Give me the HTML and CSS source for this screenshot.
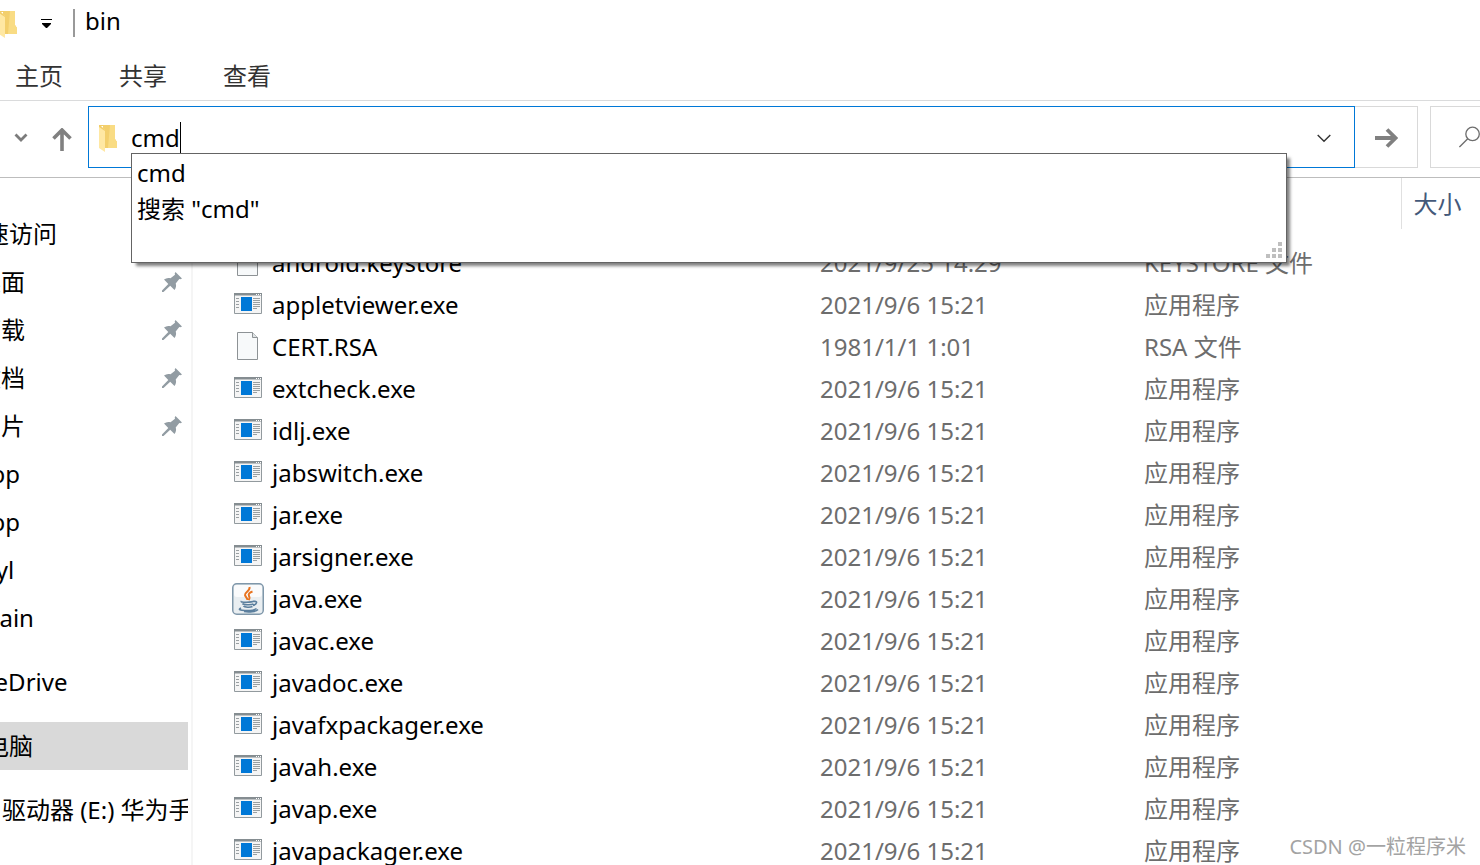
FILE: index.html
```html
<!DOCTYPE html>
<html lang="zh-CN">
<head>
<meta charset="utf-8">
<title>bin</title>
<link rel="stylesheet" href="styles.css">
</head>
<body>
<svg class="defs" aria-hidden="true">
  <symbol id="folder" viewBox="0 0 20 28">
    <path d="M5 1h12v14l2 3v6H5z" fill="#f3cf6c"/>
    <path d="M12 1h5v14l2 3v6h-9z" fill="#f9dc84"/>
    <path d="M1 1l6 5v22l-6-4z" fill="#ffe8a3"/>
    <path d="M1 1h5v1H3l4 4v1L1 3z" fill="#f2cd6a"/>
  </symbol>
  <symbol id="app" viewBox="0 0 28 22">
    <path d="M.5.5h27v20H.5z" fill="#f5f5f5" stroke="#929a9e"/>
    <path d="M0 0h28v2.500H0z" fill="#858d91"/>
    <path d="M22 1h1v1h-1zM24 1h1v1h-1zM26 1h1v1h-1z" fill="#fff"/>
    <path d="M7 4h11v14H7z" fill="#0078d7"/>
    <path d="M2 5.500h3M2 8.500h3M2 11.500h3M2 14.500h3M19 5.500h7M19 7.500h7M19 9.500h7M19 11.500h7M19 13.500h7M19 15.500h4" stroke="#999fa2"/>
  </symbol>
  <symbol id="file" viewBox="0 0 28 28">
    <path d="M3.500.5h15l5 5v22h-20z" fill="#f7f9fa" stroke="#8d9295"/>
    <path d="M18.500.5v5h5" fill="#dfe3e5" stroke="#8d9295"/>
  </symbol>
  <symbol id="java" viewBox="0 0 32 32">
    <rect x=".75" y=".75" width="30.500" height="30.500" rx="4" fill="#e9eef1" stroke="#7f97aa" stroke-width="1.500"/>
    <rect x="2" y="2" width="28" height="12" rx="3" fill="#fafbfc"/>
    <path d="M17.500 4c1 4-5 5-4.500 8 .3 2 2.500 3 2.500 5M20.500 8.500c-3 1-4.500 2.500-3.500 4.500s1 2.500-.5 4" fill="none" stroke="#e8731f" stroke-width="2"/>
    <path d="M9.500 18c-2 2 10 1.500 13 0M10.500 20.500c1 1.500 9 1.500 11 .5M11.500 23c1 1.500 7 1.500 9 .5M22 18.500c4-1 3 3-1 4M9 25c-7 3 12 3.500 15.500.5M12 28.500c5 .8 12 .3 14-2" fill="none" stroke="#5b7f9e" stroke-width="1.600"/>
  </symbol>
  <symbol id="pin" viewBox="0 0 20 20">
    <path d="M13.500 0L20 6.500l-1.500.8-1.200-.3-3.600 4.500c.8 2.300.3 4.500-1.200 6.500l-4.300-4.300L1.500 20H0v-1.500L6.300 12 2 7.500C4 6 6.200 5.600 8.500 6.300L13 2.700l-.3-1.200z" fill="#929ca3"/>
  </symbol>
</svg>

<div class="window">
  <header class="titlebar">
    <svg class="folder title-folder" aria-hidden="true"><use href="#folder"/></svg>
    <button class="plain quick" aria-label="自定义快速访问工具栏"><svg width="11" height="9" viewBox="0 0 11 9"><path d="M0 0h11v1H0zM1 4h9v1L6 9H5L1 5z"/></svg></button>
    <span class="title-rule"></span>
    <h1 class="title">bin</h1>
  </header>
  <nav class="tabs">
    <button class="plain tab">主页</button>
    <button class="plain tab">共享</button>
    <button class="plain tab">查看</button>
  </nav>

  <div class="toolbar">
    <button class="plain recent" aria-label="最近浏览的位置"><svg width="14" height="9" viewBox="0 0 14 9"><path d="M1.500 1.500L7 7l5.500-5.500" fill="none" stroke="#7c7c7c" stroke-width="2.800"/></svg></button>
    <button class="plain up" aria-label="向上"><svg width="20" height="23" viewBox="0 0 20 23"><path d="M10 23V3M1.500 10.500L10 2l8.500 8.500" fill="none" stroke="#808080" stroke-width="3.600"/></svg></button>
    <div class="address">
      <svg class="folder" aria-hidden="true"><use href="#folder"/></svg>
      <input class="path" type="text" value="cmd" aria-label="地址">
      <span class="caret"></span>
      <button class="plain expand" aria-label="以前的位置"><svg width="14" height="9" viewBox="0 0 14 9"><path d="M.7 1l6.300 6.300L13.300 1" fill="none" stroke="#333" stroke-width="1.400"/></svg></button>
      <div class="suggestions">
        <button class="plain option">cmd</button>
        <button class="plain option">搜索 "cmd"</button>
        <svg class="grip" width="16" height="16" viewBox="0 0 16 16" aria-hidden="true"><path d="M12 0h4v4h-4zM6 6h4v4H6zM12 6h4v4h-4zM0 12h4v4H0zM6 12h4v4H6zM12 12h4v4h-4z" fill="#bfbfbf"/></svg>
      </div>
    </div>
    <button class="plain go" aria-label="转到"><svg width="23" height="20" viewBox="0 0 23 20"><path d="M0 10h20M12 1.500l8.500 8.500-8.500 8.500" fill="none" stroke="#808080" stroke-width="3.800"/></svg></button>
    <button class="plain search" aria-label="搜索"><svg width="24" height="24" viewBox="0 0 24 24"><circle cx="15.500" cy="8.500" r="7.700" fill="none" stroke="#6d6d6d" stroke-width="1.500"/><path d="M10 14L.5 23.500" stroke="#6d6d6d" stroke-width="1.500"/></svg></button>
  </div>

  <main class="content">
    <aside class="sidebar">
      <ul class="tree">
        <li class="node">快速访问</li>
        <li class="node child">桌面<svg class="pin"><use href="#pin"/></svg></li>
        <li class="node child">下载<svg class="pin"><use href="#pin"/></svg></li>
        <li class="node child">文档<svg class="pin"><use href="#pin"/></svg></li>
        <li class="node child">图片<svg class="pin"><use href="#pin"/></svg></li>
        <li class="node child">app</li>
        <li class="node child">app</li>
        <li class="node child">wyl</li>
        <li class="node child">main</li>
        <li class="node group">OneDrive</li>
        <li class="node group selected">此电脑</li>
        <li class="node group drive">CD 驱动器 (E:) 华为手机</li>
      </ul>
    </aside>
    <section class="files">
      <table class="list">
        <colgroup><col><col class="col-date"><col class="col-type"><col class="col-size"></colgroup>
        <thead><tr><td></td><td></td><td></td><th>大小</th></tr></thead>
        <tbody>
          <tr><td><div class="name"><svg class="icon"><use href="#file"/></svg>android.keystore</div></td><td>2021/9/25 14:29</td><td>KEYSTORE 文件</td><td></td></tr>
          <tr><td><div class="name"><svg class="icon app"><use href="#app"/></svg>appletviewer.exe</div></td><td>2021/9/6 15:21</td><td>应用程序</td><td></td></tr>
          <tr><td><div class="name"><svg class="icon"><use href="#file"/></svg>CERT.RSA</div></td><td>1981/1/1 1:01</td><td>RSA 文件</td><td></td></tr>
          <tr><td><div class="name"><svg class="icon app"><use href="#app"/></svg>extcheck.exe</div></td><td>2021/9/6 15:21</td><td>应用程序</td><td></td></tr>
          <tr><td><div class="name"><svg class="icon app"><use href="#app"/></svg>idlj.exe</div></td><td>2021/9/6 15:21</td><td>应用程序</td><td></td></tr>
          <tr><td><div class="name"><svg class="icon app"><use href="#app"/></svg>jabswitch.exe</div></td><td>2021/9/6 15:21</td><td>应用程序</td><td></td></tr>
          <tr><td><div class="name"><svg class="icon app"><use href="#app"/></svg>jar.exe</div></td><td>2021/9/6 15:21</td><td>应用程序</td><td></td></tr>
          <tr><td><div class="name"><svg class="icon app"><use href="#app"/></svg>jarsigner.exe</div></td><td>2021/9/6 15:21</td><td>应用程序</td><td></td></tr>
          <tr><td><div class="name"><svg class="icon java"><use href="#java"/></svg>java.exe</div></td><td>2021/9/6 15:21</td><td>应用程序</td><td></td></tr>
          <tr><td><div class="name"><svg class="icon app"><use href="#app"/></svg>javac.exe</div></td><td>2021/9/6 15:21</td><td>应用程序</td><td></td></tr>
          <tr><td><div class="name"><svg class="icon app"><use href="#app"/></svg>javadoc.exe</div></td><td>2021/9/6 15:21</td><td>应用程序</td><td></td></tr>
          <tr><td><div class="name"><svg class="icon app"><use href="#app"/></svg>javafxpackager.exe</div></td><td>2021/9/6 15:21</td><td>应用程序</td><td></td></tr>
          <tr><td><div class="name"><svg class="icon app"><use href="#app"/></svg>javah.exe</div></td><td>2021/9/6 15:21</td><td>应用程序</td><td></td></tr>
          <tr><td><div class="name"><svg class="icon app"><use href="#app"/></svg>javap.exe</div></td><td>2021/9/6 15:21</td><td>应用程序</td><td></td></tr>
          <tr><td><div class="name"><svg class="icon app"><use href="#app"/></svg>javapackager.exe</div></td><td>2021/9/6 15:21</td><td>应用程序</td><td></td></tr>
        </tbody>
      </table>
    </section>
  </main>
  <p class="watermark">CSDN @一粒程序米</p>
</div>
</body>
</html>
```

FILE: styles.css
```css
* { box-sizing: border-box; }

body {
  margin: 0;
  background: #fff;
  color: #000;
  font: 24px/32px "Noto Sans", "Noto Sans CJK SC", sans-serif;
}

.defs { position: absolute; width: 0; height: 0; }

.window {
  position: relative;
  display: flex;
  flex-direction: column;
  height: 100vh;
  overflow: hidden;
}

.plain {
  padding: 0;
  border: 0;
  background: none;
  color: inherit;
  font: inherit;
  display: flex;
  align-items: center;
  justify-content: center;
}

.folder { width: 20px; height: 28px; flex: none; }

/* Title bar */
.titlebar {
  display: flex;
  align-items: center;
  height: 46px;
  flex: none;
}
.title-folder { margin: 2px 0 0 -2px; }
.quick { width: 11px; margin-left: 23px; }
.title-rule { width: 2px; height: 28px; margin: 0 10px 0 21px; background: #999; }
.title { margin: 0; padding-bottom: 4px; font-size: 24px; font-weight: 400; }

.tabs {
  display: flex;
  gap: 56px;
  height: 55px;
  flex: none;
  align-items: center;
  padding: 6px 0 0 15px;
  border-bottom: 1px solid #dadbdc;
  color: #333;
}

/* Address row */
.toolbar {
  display: flex;
  height: 77px;
  flex: none;
  padding: 5px 0 9px;
  border-bottom: 1px solid #bdbdbd;
}
.recent { width: 42px; }
.up { width: 40px; margin-right: 6px; padding-top: 4px; }
.address {
  position: relative;
  display: flex;
  align-items: center;
  flex: 1;
  padding: 2px 0 0 9px;
  border: 1px solid #0078d7;
}
.path {
  field-sizing: content;
  margin-left: 13px;
  padding: 0;
  border: 0;
  outline: 0;
  background: none;
  color: inherit;
  font: inherit;
}
.caret { width: 1px; height: 32px; background: #000; }
.expand { width: 60px; margin-left: auto; }
.go { width: 63px; padding-top: 2px; border: 1px solid #d9d9d9; border-left: 0; }
.search {
  width: 50px;
  margin-left: 12px;
  padding-left: 28px;
  justify-content: flex-start;
  border: 1px solid #d9d9d9;
  border-right: 0;
}

.suggestions {
  position: absolute;
  z-index: 2;
  top: 46px;
  left: 42px;
  right: 67px;
  height: 110px;
  padding: 1px 5px;
  border: 1px solid #646464;
  background: #fff;
  box-shadow: 4px 4px 3px -1px rgba(0, 0, 0, .5);
}
.option { height: 36px; }
.grip { position: absolute; right: 4px; bottom: 4px; }

/* Body */
.content { display: flex; flex: 1; min-height: 0; }
.sidebar {
  width: 193px;
  flex: none;
  overflow: hidden;
  padding-right: 3px;
  border-right: 2px solid #f5f5f5;
}
.tree {
  margin: 32px 0 0 -39px;
  padding: 0;
  list-style: none;
}
.node {
  display: flex;
  align-items: center;
  height: 48px;
  overflow: hidden;
  white-space: nowrap;
}
.child { padding-left: 16px; }
.group { margin-top: 16px; }
.drive { padding-left: 2px; }
.selected { background: #d9d9d9; }
.pin { width: 20px; height: 20px; margin: 0 6px 0 auto; }

.files { flex: 1; min-width: 0; overflow: hidden; }
.list { width: 100%; table-layout: fixed; border-collapse: collapse; }
.col-date { width: 324px; }
.col-type { width: 269px; }
.col-size { width: 79px; }
.list th {
  height: 51px;
  padding: 0 0 0 12px;
  border-left: 1px solid #e0e0e0;
  color: #44597a;
  font-weight: 400;
  text-align: left;
}
.list tbody::before { content: ""; display: block; height: 13px; }
.list tbody td { height: 42px; padding: 0 0 0 12px; color: #6d6d6d; white-space: nowrap; }
.list tbody td:first-child { padding-left: 41px; color: #000; }
.name { display: flex; align-items: center; gap: 10px; }
.icon { width: 28px; height: 28px; margin-bottom: 2px; flex: none; }
.app { height: 22px; }
.java { width: 32px; height: 32px; margin: 0 -2px; }

.watermark {
  position: absolute;
  right: 14px;
  bottom: 2px;
  margin: 0;
  color: #a3a3a3;
  font-size: 20px;
}
```
